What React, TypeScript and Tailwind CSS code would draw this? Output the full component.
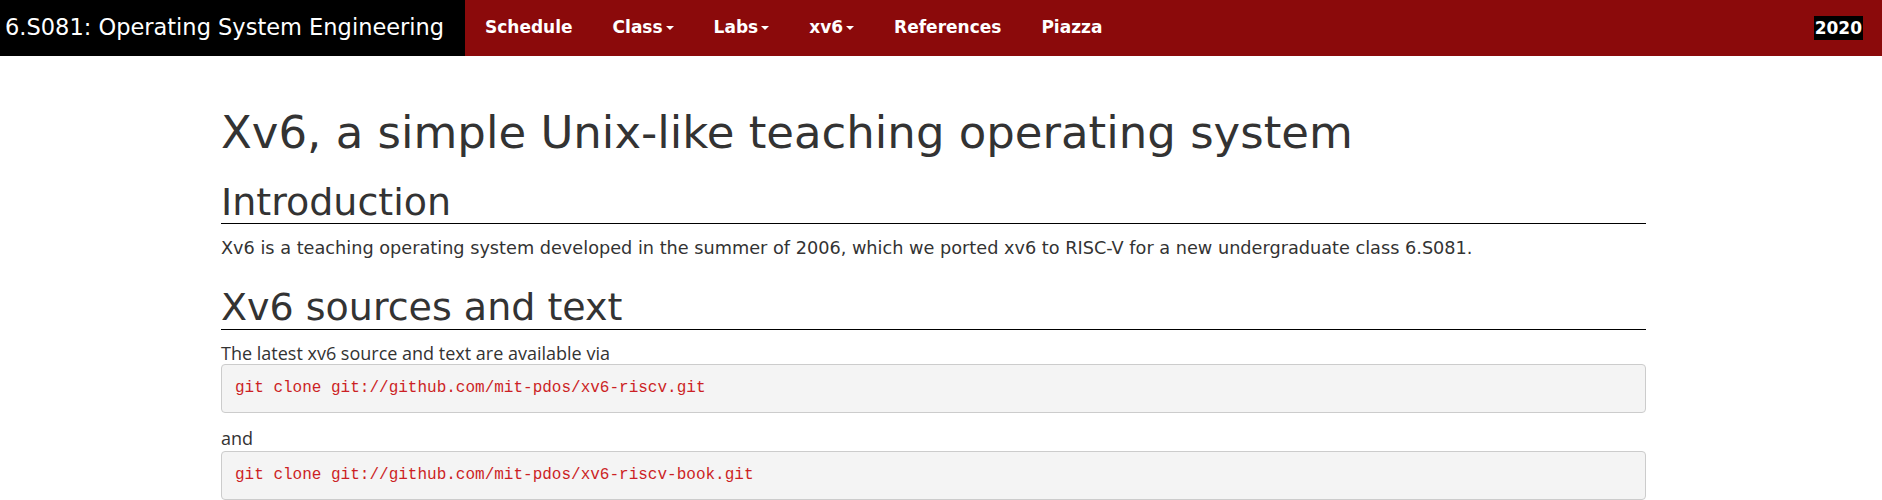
const tahoma = "font-['DejaVu_Sans',sans-serif]"

function Caret() {
  return <span className="ml-[3px] inline-block h-0 w-0 border-x-[4px] border-t-[4px] border-x-transparent border-t-white align-middle" />
}

function NavLink({ label, dropdown }: { label: string; dropdown?: boolean }) {
  return (
    <a href="#" className="flex items-center px-[20px] text-[17px] font-bold text-white">
      {label}
      {dropdown && <Caret />}
    </a>
  )
}

export default function App() {
  return (
    <div className={`min-h-screen bg-white ${tahoma}`}>
      <nav className="flex h-14 items-stretch bg-[#8b0a0b]">
        <div className="flex w-[465px] items-center bg-black pl-[5px] text-[22.5px] text-white">
          6.S081: Operating System Engineering
        </div>
        <div className="flex items-stretch">
          <NavLink label="Schedule" />
          <NavLink label="Class" dropdown />
          <NavLink label="Labs" dropdown />
          <NavLink label="xv6" dropdown />
          <NavLink label="References" />
          <NavLink label="Piazza" />
        </div>
        <div className="ml-auto mr-[19px] flex items-center">
          <span className="bg-black px-[1px] text-[17px] font-bold leading-6 text-white">2020</span>
        </div>
      </nav>

      <main className="ml-[221px] w-[1425px] text-[#333]">
        <h1 className="mt-[52px] text-[45px] leading-[1.1]">Xv6, a simple Unix-like teaching operating system</h1>
        <h2 className="mt-[24px] border-b border-black text-[38px] leading-[1.1]">Introduction</h2>
        <p className="mt-[12px] text-[17.7px] leading-[1.4]">
          Xv6 is a teaching operating system developed in the summer of 2006, which we ported xv6 to RISC-V for a new undergraduate class 6.S081.
        </p>
        <h2 className="mt-[26px] border-b border-black text-[38px] leading-[1.1]">Xv6 sources and text</h2>
        <div className="font-['Open_Sans',sans-serif] text-[18px] leading-[1.25]">
          <p className="mt-[12px]">The latest xv6 source and text are available via</p>
          <pre className="rounded border border-[#ccc] bg-[#f4f4f4] px-[13px] py-[13px] font-['Liberation_Mono',monospace] text-[16px] leading-[21px] text-[#cc1f25]">
            git clone git://github.com/mit-pdos/xv6-riscv.git
          </pre>
          <p className="mt-[14px]">and</p>
          <pre className="mt-px rounded border border-[#ccc] bg-[#f4f4f4] px-[13px] py-[13px] font-['Liberation_Mono',monospace] text-[16px] leading-[21px] text-[#cc1f25]">
            git clone git://github.com/mit-pdos/xv6-riscv-book.git
          </pre>
        </div>
      </main>
    </div>
  )
}
